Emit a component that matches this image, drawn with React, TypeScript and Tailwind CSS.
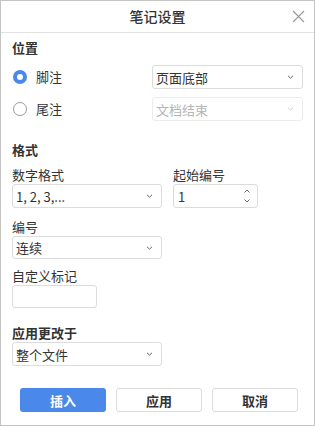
import React from "react";

const font = { fontFamily: '"Noto Sans CJK SC", "Noto Sans", "Liberation Sans", sans-serif' };

function Chevron({ disabled }: { disabled?: boolean }) {
  return (
    <svg width="7" height="4" viewBox="0 0 7 4" className="shrink-0">
      <path d="M1 0.8 L3.5 3.2 L6 0.8" fill="none" stroke={disabled ? "#cccccc" : "#666"} strokeWidth="1" />
    </svg>
  );
}

function Select({ value, w, disabled, h = "h-[24px]" }: { value: string; w: string; disabled?: boolean; h?: string }) {
  return (
    <div
      className={`${w} ${h} flex items-center justify-between rounded-[3px] border pl-[3px] pr-[8px] ${
        disabled ? "border-[#ececec] text-[#b4b4b4]" : "border-[#dcdcdc] text-[#333]"
      } bg-white text-[13px] leading-none`}
    >
      <span>{value}</span>
      <Chevron disabled={disabled} />
    </div>
  );
}

function Radio({ checked, label }: { checked?: boolean; label: string }) {
  return (
    <div className="flex items-center w-[140px]">
      {checked ? (
        <div className="w-[14px] h-[14px] rounded-full bg-[#4a88ea] flex items-center justify-center ml-[1px]">
          <div className="w-[6px] h-[6px] rounded-full bg-white" />
        </div>
      ) : (
        <div className="w-[14px] h-[14px] rounded-full border border-[#9a9a9a] bg-white ml-[1px]" />
      )}
      <span className="ml-[9px] text-[13px] text-[#333]">{label}</span>
    </div>
  );
}

export default function App() {
  return (
    <div style={font} className="w-[315px] h-[426px] border border-[#c4c4c4] bg-white flex flex-col text-[#333]">
      <div className="relative h-[32px] border-b border-[#e2e2e2] flex items-center justify-center shrink-0">
        <span className="text-[14px] font-medium text-[#333]">笔记设置</span>
        <svg className="absolute right-[9px] top-[9px]" width="13" height="13" viewBox="0 0 13 13">
          <path d="M1 1 L12 12 M12 1 L1 12" stroke="#9a9a9a" strokeWidth="1.1" />
        </svg>
      </div>
      <div className="px-[11px] flex flex-col">
        <div className="mt-[5px] h-[20px] leading-[20px] text-[13px] font-bold">位置</div>
        <div className="mt-[7px] flex items-center">
          <Radio checked label="脚注" />
          <Select value="页面底部" w="w-[151px]" />
        </div>
        <div className="mt-[8px] flex items-center">
          <Radio label="尾注" />
          <Select value="文档结束" w="w-[151px]" disabled />
        </div>
        <div className="mt-[19px] h-[20px] leading-[20px] text-[13px] font-bold">格式</div>
        <div className="mt-[6px] flex gap-[11px]">
          <div className="flex flex-col w-[150px]">
            <div className="h-[18px] leading-[18px] text-[13px]">数字格式</div>
            <Select value="1, 2, 3,..." w="w-[150px]" h="h-[24px]" />
          </div>
          <div className="flex flex-col w-[85px]">
            <div className="h-[18px] leading-[18px] text-[13px]">起始编号</div>
            <div className="w-[85px] h-[24px] rounded-[3px] border border-[#dcdcdc] flex items-center justify-between pl-[4px] pr-[6px] text-[13px] leading-none">
              <span>1</span>
              <svg width="8" height="16" viewBox="0 0 8 16">
                <path d="M1.5 4.5 L4 2 L6.5 4.5" fill="none" stroke="#666" strokeWidth="1" />
                <path d="M1.5 11.5 L4 14 L6.5 11.5" fill="none" stroke="#666" strokeWidth="1" />
              </svg>
            </div>
          </div>
        </div>
        <div className="mt-[10px] h-[18px] leading-[18px] text-[13px]">编号</div>
        <Select value="连续" w="w-[150px]" h="h-[23px]" />
        <div className="mt-[8px] h-[18px] leading-[18px] text-[13px]">自定义标记</div>
        <div className="w-[85px] h-[23px] rounded-[3px] border border-[#dcdcdc]" />
        <div className="mt-[16px] h-[18px] leading-[18px] text-[13px] font-bold">应用更改于</div>
        <Select value="整个文件" w="w-[150px]" />
        <div className="mt-[22px] pl-[8px] flex gap-[10px]">
          <button className="w-[86px] h-[24px] rounded-[3px] bg-[#4a88ea] text-white text-[13px] font-bold leading-none">插入</button>
          <button className="w-[86px] h-[24px] rounded-[3px] border border-[#dcdcdc] bg-white text-[#333] text-[13px] font-bold leading-none">应用</button>
          <button className="w-[86px] h-[24px] rounded-[3px] border border-[#dcdcdc] bg-white text-[#333] text-[13px] font-bold leading-none">取消</button>
        </div>
      </div>
    </div>
  );
}
